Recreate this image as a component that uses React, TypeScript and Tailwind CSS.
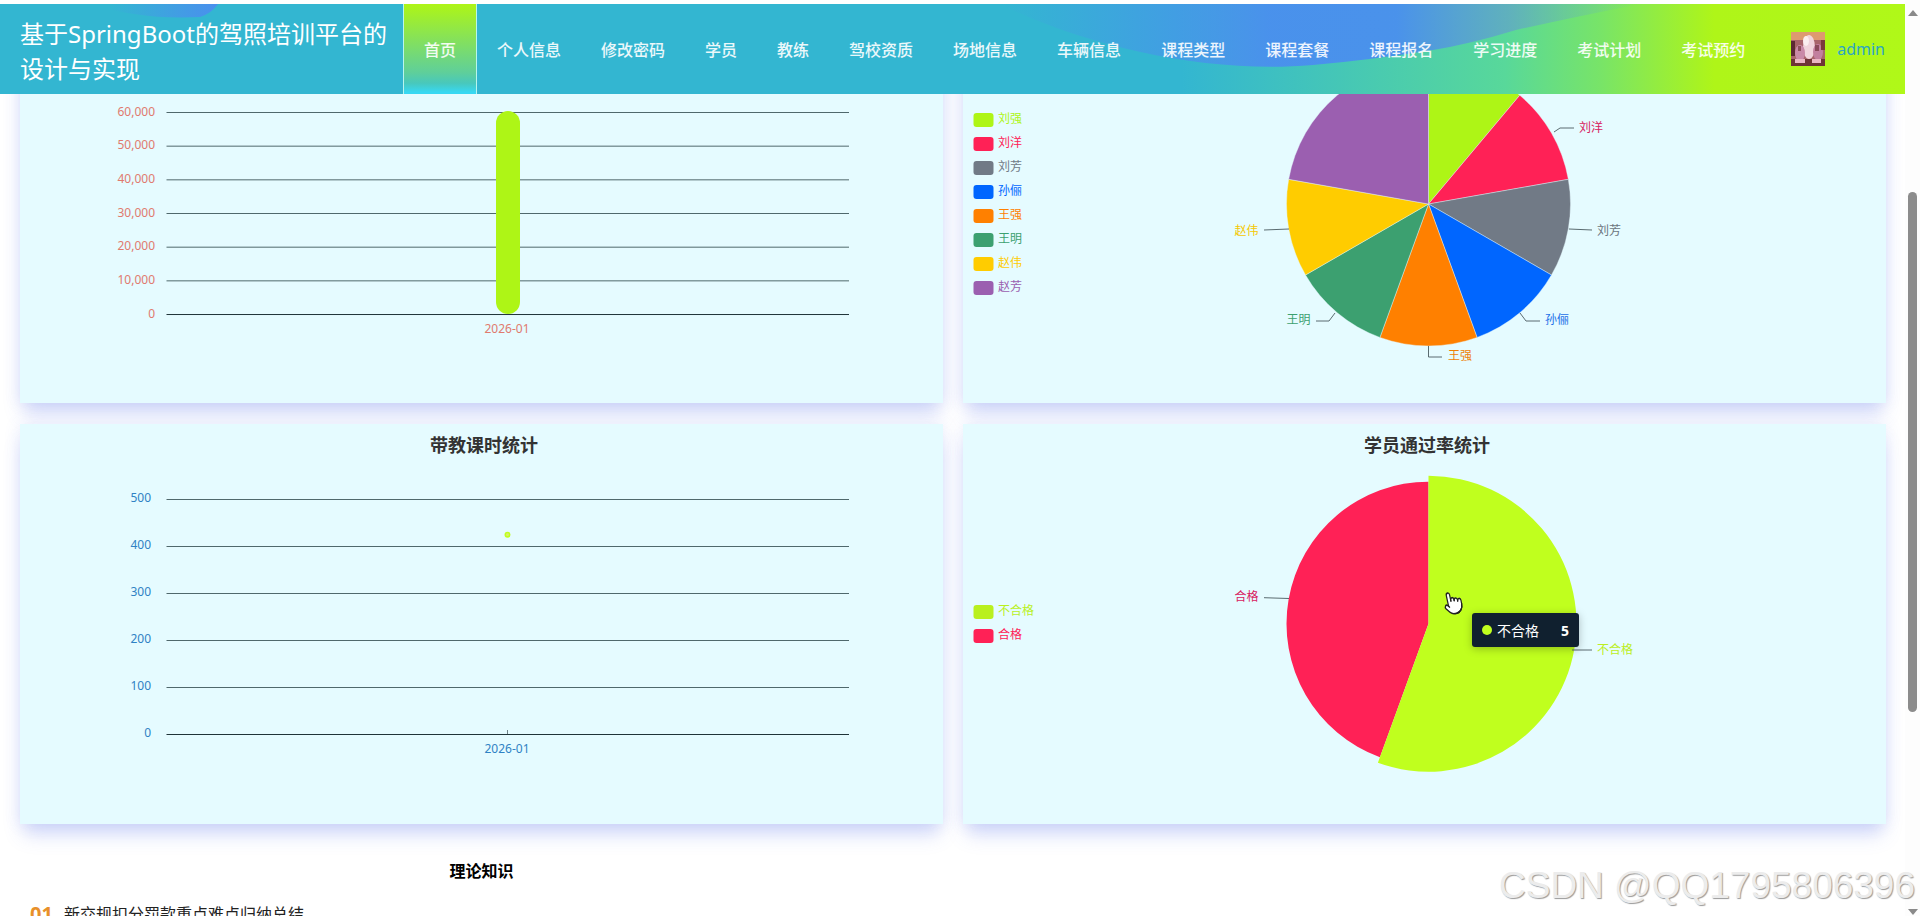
import React from "react";

const NAV_ITEMS = ["个人信息", "修改密码", "学员", "教练", "驾校资质", "场地信息", "车辆信息", "课程类型", "课程套餐", "课程报名", "学习进度", "考试计划", "考试预约"];

const PIE_ONE = [
  { name: "刘强", color: "#aef516", from: 0, to: 40 },
  { name: "刘洋", color: "#ff2156", from: 40, to: 80 },
  { name: "刘芳", color: "#717a86", from: 80, to: 120 },
  { name: "孙俪", color: "#0066ff", from: 120, to: 160 },
  { name: "王强", color: "#ff8000", from: 160, to: 200 },
  { name: "王明", color: "#3ca070", from: 200, to: 240 },
  { name: "赵伟", color: "#ffcc00", from: 240, to: 280 },
  { name: "赵芳", color: "#9b5fb0", from: 280, to: 360 },
];

const PIE_ONE_LABELS = [
  { text: "刘洋", color: "#d81b60", x: 628, y: 124, line: "591,129 597,125 611,125" },
  { text: "刘芳", color: "#6c757d", x: 646, y: 227, line: "606,226 629,227" },
  { text: "孙俪", color: "#1c6fe8", x: 594, y: 316, line: "557,310 563,318 577,318" },
  { text: "王强", color: "#ee8207", x: 497, y: 352, line: "465.5,343 465.5,354 479,354" },
  { text: "王明", color: "#3ca070", x: 335.6, y: 316, line: "372,310 366,318 353,318" },
  { text: "赵伟", color: "#f5c800", x: 283.6, y: 227, line: "326,226 301,227" },
];

const slice = (cx: number, cy: number, r: number, from: number, to: number) => {
  const point = (deg: number) => {
    const rad = (deg * Math.PI) / 180;
    return `${cx + r * Math.sin(rad)} ${cy - r * Math.cos(rad)}`;
  };
  return `M${cx} ${cy} L${point(from)} A${r} ${r} 0 ${to - from > 180 ? 1 : 0} 1 ${point(to)} Z`;
};

const chartFont = { fontFamily: '"Noto Sans", "Noto Sans CJK SC", sans-serif' };

const ChartTitle = ({ children }: { children: string }) => (
  <text x={464} y={20.5} textAnchor="middle" dominantBaseline="central" fontSize={18} fontWeight={700} fill="#333">
    {children}
  </text>
);

const Legend = ({ items, top }: { items: { name: string; color: string }[]; top: number }) => (
  <>
    {items.map((item, i) => (
      <g key={item.name}>
        <rect x={10.5} y={top + i * 24} width={20} height={14} rx={3} fill={item.color} />
        <text x={35} y={top + 5.5 + i * 24} dominantBaseline="central" fontSize={12} fill={item.color}>
          {item.name}
        </text>
      </g>
    ))}
  </>
);

const Axis = ({ ticks, color, labelRight, labelLift }: { ticks: { label: string; y: number }[]; color: string; labelRight: number; labelLift: number }) => (
  <>
    {ticks.map((t, i) => (
      <g key={t.label}>
        <line x1={146.5} x2={829} y1={t.y} y2={t.y} stroke={i === ticks.length - 1 ? "#1f3338" : "#4f686c"} strokeWidth={1} />
        <text x={labelRight} y={t.y - labelLift} textAnchor="end" dominantBaseline="central" fontSize={12} fill={color}>
          {t.label}
        </text>
      </g>
    ))}
    <text x={487} y={ticks[ticks.length - 1].y + 14} textAnchor="middle" dominantBaseline="central" fontSize={12} fill={color}>
      2026-01
    </text>
  </>
);

const ChartCard = ({ children }: { children: React.ReactNode }) => (
  <div className="h-[400px] bg-[#e5fbff] shadow-[0_14px_18px_-4px_rgba(80,110,230,0.26),0_0_16px_rgba(80,110,230,0.12)]">
    <svg width="923" height="400" viewBox="0 0 923 400" className="block" style={chartFont}>
      {children}
    </svg>
  </div>
);

const Avatar = () => (
  <svg width="34" height="34" viewBox="0 0 34 34" className="shrink-0">
    <rect width="34" height="34" fill="#a8646a" />
    <rect width="34" height="8" fill="#dd9a70" />
    <rect y="27" width="34" height="7" fill="#6e3436" />
    <ellipse cx="18" cy="15" rx="6" ry="12" fill="#f0d4dc" />
    <ellipse cx="15" cy="9" rx="3" ry="5" fill="#fbeef0" />
    <ellipse cx="9" cy="21" rx="5" ry="8" fill="#c98aa8" />
    <ellipse cx="27" cy="20" rx="5" ry="8" fill="#c27f9e" />
    <rect x="24" y="13" width="4" height="6" fill="#8a4a5a" />
    <rect x="7" y="14" width="3" height="5" fill="#8f4e5e" />
    <rect x="4" y="27" width="10" height="4" fill="#eab6c4" />
    <rect x="21" y="27" width="9" height="4" fill="#eab6c4" />
    <rect x="0" y="9" width="4" height="15" fill="#5c2a32" />
    <rect x="30" y="8" width="4" height="10" fill="#7a3b3c" />
  </svg>
);

const HeaderWave = () => (
  <svg width="1905" height="90" viewBox="0 0 1905 90" className="absolute inset-0 pointer-events-none">
    <defs>
      <linearGradient id="waveRight" x1="1000" x2="1640" y1="0" y2="0" gradientUnits="userSpaceOnUse">
        <stop offset="0" stopColor="#4a8fee" stopOpacity="0" />
        <stop offset="0.42" stopColor="#4a8fee" stopOpacity="0.95" />
        <stop offset="0.62" stopColor="#4a8fee" stopOpacity="0.95" />
        <stop offset="0.8" stopColor="#62a8c4" stopOpacity="0.8" />
        <stop offset="1" stopColor="#6cc2a6" stopOpacity="0" />
      </linearGradient>
      <linearGradient id="waveLeft" x1="110" x2="218" y1="0" y2="0" gradientUnits="userSpaceOnUse">
        <stop offset="0" stopColor="#4a8fee" stopOpacity="0" />
        <stop offset="1" stopColor="#4a8fee" />
      </linearGradient>
    </defs>
    <path d="M1000 0 L1640 0 Q1570 14 1516 26 Q1470 40 1433 46 Q1370 56 1313 61 C1210 70 1090 44 1000 0 Z" fill="url(#waveRight)" />
    <path d="M90 0 L218 0 Q212 9 200 13 Q140 16 90 0 Z" fill="url(#waveLeft)" />
  </svg>
);

const Header = () => (
  <div className="absolute top-0 left-0 w-full bg-white pt-1">
    <header className="relative flex h-[90px] items-stretch bg-[linear-gradient(90deg,#33b6d1_0%,#33b6d1_62%,#58d89a_79%,#78e468_84%,#aff518_90%,#b0f818_100%)]">
      <HeaderWave />
      <div className="relative flex w-[403px] shrink-0 items-center pl-5 pt-1 text-[24px] leading-[35px] text-white">
        基于SpringBoot的驾照培训平台的设计与实现
      </div>
      <nav className="relative flex items-stretch text-[16px] font-medium text-white/90">
        <a className="flex items-center border-x border-[#b9f5ee] bg-[linear-gradient(180deg,#aef516_0%,#5fcf9a_76%,#48c8bc_88%,#38d8f2_98%)] px-5 pt-0.5">首页</a>
        {NAV_ITEMS.map((item) => (
          <a key={item} className="flex items-center px-5 pt-0.5">
            {item}
          </a>
        ))}
      </nav>
      <div className="relative ml-auto flex items-center gap-3 pr-5">
        <Avatar />
        <span className="text-[16px] text-[#2aa5c5]">admin</span>
      </div>
    </header>
  </div>
);

const Cursor = () => (
  <svg width="20" height="26" viewBox="0 0 24 24" preserveAspectRatio="none" className="absolute left-[1443px] top-[590px] -rotate-12">
    <path d="M6 14V4a2 2 0 0 1 4 0v5a2 2 0 0 1 4 0a2 2 0 0 1 4 1a2 2 0 0 1 4 1v3a8 8 0 0 1-8 8h-2c-2.8 0-4.5-.86-6-2.34l-3.6-3.6a2 2 0 0 1 2.83-2.82Z" fill="#fff" />
    <g fill="none" stroke="#222" strokeWidth="1.5" strokeLinecap="round" strokeLinejoin="round">
      <path d="M22 14a8 8 0 0 1-8 8" />
      <path d="M18 11v-1a2 2 0 0 0-2-2a2 2 0 0 0-2 2" />
      <path d="M14 10V9a2 2 0 0 0-2-2a2 2 0 0 0-2 2v1" />
      <path d="M10 9.5V4a2 2 0 0 0-2-2a2 2 0 0 0-2 2v10" />
      <path d="M18 11a2 2 0 1 1 4 0v3a8 8 0 0 1-8 8h-2c-2.8 0-4.5-.86-5.99-2.34l-3.6-3.6a2 2 0 0 1 2.83-2.82L7 15" />
    </g>
  </svg>
);

const Scrollbar = () => (
  <div className="flex h-full w-[15px] shrink-0 flex-col items-center bg-[#fdfdfd] pt-[10px]">
    <svg width="10" height="6" viewBox="0 0 10 6" className="shrink-0">
      <path d="M5 0 L10 6 L0 6 Z" fill="#8a8a8a" />
    </svg>
    <div className="mt-[176px] h-[520px] w-[9px] shrink-0 rounded-full bg-[#8c8c8c]" />
    <svg width="10" height="6" viewBox="0 0 10 6" className="mt-auto mb-[1px] shrink-0">
      <path d="M0 0 L10 0 L5 6 Z" fill="#8a8a8a" />
    </svg>
  </div>
);

const redTicks = ["60,000", "50,000", "40,000", "30,000", "20,000", "10,000", "0"].map((label, i) => ({ label, y: 109.5 + i * 33.67 }));
const blueTicks = ["500", "400", "300", "200", "100", "0"].map((label, i) => ({ label, y: 75.5 + i * 47 }));

export default function App() {
  return (
    <div className="relative flex h-[916px] w-[1920px] overflow-hidden bg-white font-['Noto_Sans','Noto_Sans_CJK_SC',sans-serif]">
      <main className="relative w-[1905px] shrink-0 overflow-hidden pl-5 pr-[19px] pt-[3px]">
        <div className="grid grid-cols-2 gap-x-5 gap-y-[21px]">
          <ChartCard>
            <Axis ticks={redTicks} color="#e07a6e" labelRight={135} labelLift={1.5} />
            <rect x={476} y={108} width={24} height={203} rx={12} fill="#aef516" />
          </ChartCard>

          <ChartCard>
            {PIE_ONE.map((p) => (
              <path key={p.name} d={slice(465.5, 201, 142, p.from, p.to)} fill={p.color} stroke="#e5fbff" strokeWidth={0.4} />
            ))}
            {PIE_ONE_LABELS.map((l) => (
              <g key={l.text}>
                <polyline points={l.line} fill="none" stroke="#5a6b70" strokeWidth={1} />
                <text x={l.x} y={l.y} textAnchor="middle" dominantBaseline="central" fontSize={12} fill={l.color}>
                  {l.text}
                </text>
              </g>
            ))}
            <Legend items={PIE_ONE} top={110} />
          </ChartCard>

          <ChartCard>
            <ChartTitle>带教课时统计</ChartTitle>
            <Axis ticks={blueTicks} color="#2f82c4" labelRight={131} labelLift={2.5} />
            <line x1={487.5} x2={487.5} y1={306} y2={311} stroke="#1f3338" strokeWidth={0.6} />
            <circle cx={487.5} cy={110.7} r={2.2} fill="#d8f070" stroke="#c0ff1e" strokeWidth={1.6} />
          </ChartCard>

          <ChartCard>
            <ChartTitle>学员通过率统计</ChartTitle>
            <path d={slice(465.5, 199.7, 142, 200, 360)} fill="#ff2156" />
            <path d={slice(465.5, 199.7, 148, 0, 200)} fill="#c0ff1e" />
            <polyline points="301,173.7 326,174.5" fill="none" stroke="#5a6b70" strokeWidth={1} />
            <text x={283.6} y={172.7} textAnchor="middle" dominantBaseline="central" fontSize={12} fill="#d81b60">合格</text>
            <polyline points="609,226 629,226" fill="none" stroke="#5a6b70" strokeWidth={1} />
            <text x={652} y={225} textAnchor="middle" dominantBaseline="central" fontSize={12} fill="#bbee22">不合格</text>
            <Legend
              items={[
                { name: "不合格", color: "#b9f01e" },
                { name: "合格", color: "#ff2156" },
              ]}
              top={181}
            />
          </ChartCard>
        </div>

        <section className="mt-[35px] w-[923px]">
          <h2 className="text-center text-[16px] leading-6 font-bold text-black">理论知识</h2>
          <div className="mt-[19px] flex items-center gap-[11px] pl-[10px] text-[16px] leading-6 text-[#222]">
            <span className="text-[20px] font-bold text-[#e8902a]">01</span>
            <span>新交规扣分罚款重点难点归纳总结</span>
          </div>
        </section>

        <Header />
        <Cursor />
        <div className="absolute left-[1472px] top-[613px] flex h-[34px] w-[107px] items-center justify-between rounded-[3px] bg-[#10202f] px-[10px] text-[14px] text-white shadow-[0_2px_8px_rgba(0,0,0,0.25)]">
          <span className="flex items-center gap-[5px]">
            <span className="h-[10px] w-[10px] rounded-full bg-[#c0ff1e]" />
            不合格
          </span>
          <span className="font-bold">5</span>
        </div>
      </main>

      <Scrollbar />

      <div className="absolute left-[1499px] top-[866px] whitespace-nowrap font-['Liberation_Sans',sans-serif] text-[37px] leading-10 text-[#ececec] [text-shadow:1px_1px_1px_#9a9a9a]">
        CSDN @QQ1795806396
      </div>
    </div>
  );
}
